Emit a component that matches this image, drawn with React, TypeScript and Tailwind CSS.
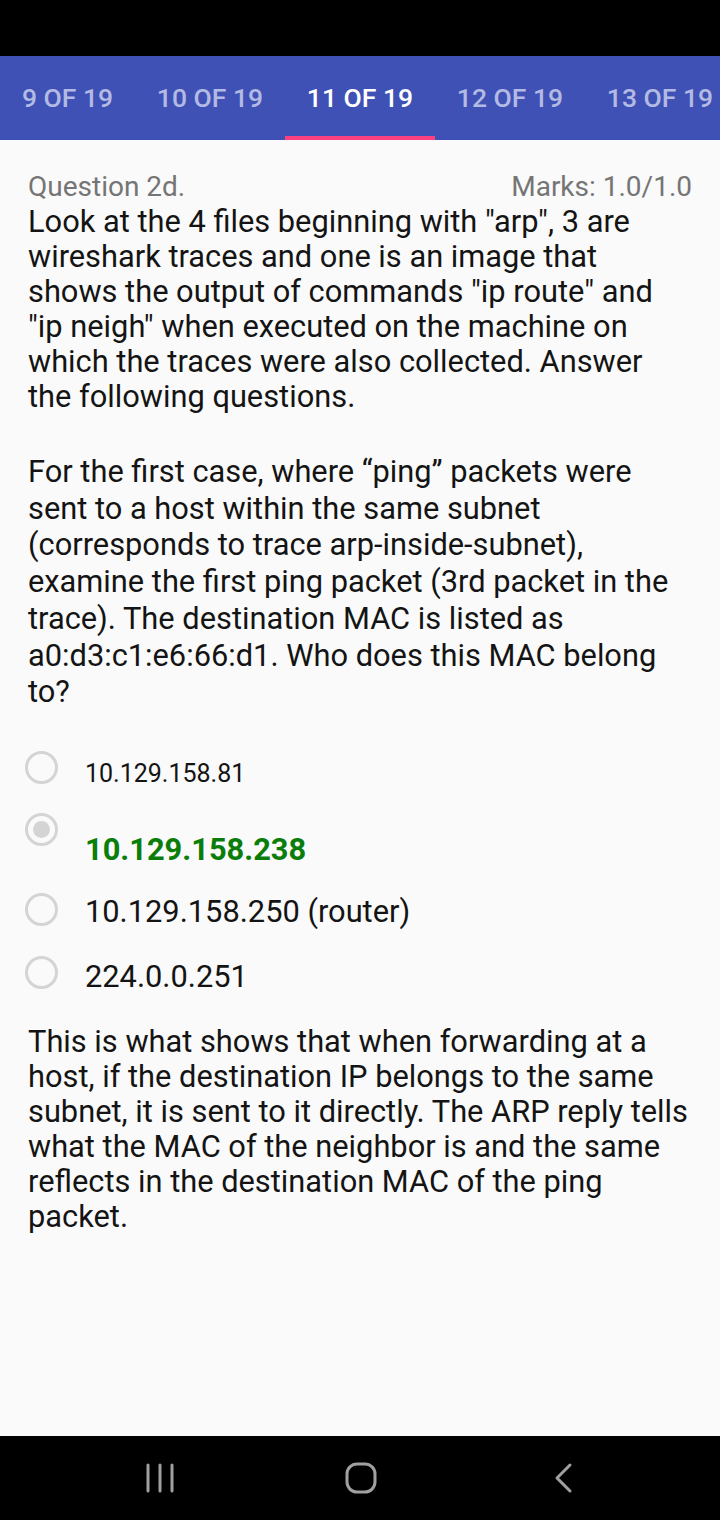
import React from "react";

const tabs = [
  { label: "9 OF 19", w: "w-[135px]", active: false },
  { label: "10 OF 19", w: "w-[150px]", active: false },
  { label: "11 OF 19", w: "w-[150px]", active: true },
  { label: "12 OF 19", w: "w-[150px]", active: false },
  { label: "13 OF 19", w: "w-[150px]", active: false },
];

function Radio({ checked }: { checked?: boolean }) {
  return (
    <div className="w-[33px] h-[33px] rounded-full border-[3px] border-[#d4d4d4] flex items-center justify-center shrink-0">
      {checked && <div className="w-[17px] h-[17px] rounded-full bg-[#d4d4d4]" />}
    </div>
  );
}

export default function App() {
  return (
    <div className="w-[720px] h-[1520px] flex flex-col bg-[#fafafa] overflow-hidden" style={{ fontFamily: "Roboto, 'Noto Sans', sans-serif" }}>
      <div className="h-[56px] bg-black shrink-0" />
      <div className="h-[84px] bg-[#3f51b5] flex overflow-hidden shrink-0">
        {tabs.map((t) => (
          <div key={t.label} className={`${t.w} shrink-0 flex flex-col h-full`}>
            <div className={`flex-1 pt-[4px] flex items-center justify-center text-[26.5px] font-medium ${t.active ? "text-white" : "text-[#b3bae3]"}`}>
              {t.label}
            </div>
            <div className={`h-[4px] ${t.active ? "bg-[#ff4081]" : ""}`} />
          </div>
        ))}
      </div>
      <div className="flex-1 flex flex-col">
        <div className="pl-[28px] w-[685px] pt-[30px]">
          <div className="flex justify-between items-center text-[28px] leading-[34px] text-[#757575] w-[664px]">
            <span>Question 2d.</span>
            <span>Marks: 1.0/1.0</span>
          </div>
          <div className="text-[30.8px] leading-[35px] text-[#141414]">
            Look at the 4 files beginning with "arp", 3 are wireshark traces and one is an image that shows the output of commands "ip route" and "ip neigh" when executed on the machine on which the traces were also collected. Answer the following questions.
          </div>
          <div className="text-[30.8px] leading-[36.7px] text-[#141414] mt-[40px]">
            For the first case, where “ping” packets were sent to a host within the same subnet (corresponds to trace arp-inside-subnet), examine the first ping packet (3rd packet in the trace). The destination MAC is listed as a0:d3:c1:e6:66:d1. Who does this MAC belong to?
          </div>
        </div>
        <div className="mt-[25px] flex flex-col">
          <div className="h-[63px] flex items-center pl-[25px]">
            <Radio />
            <span className="ml-[27px] mt-[12px] text-[25px] text-[#141414]">10.129.158.81</span>
          </div>
          <div className="h-[79px] flex items-start pl-[25px]">
            <div className="mt-[14px]"><Radio checked /></div>
            <span className="ml-[27px] mt-[33px] text-[30.8px] leading-[35px] font-bold text-[#0a7d0a]">10.129.158.238</span>
          </div>
          <div className="h-[63px] flex items-center pl-[25px]">
            <Radio />
            <span className="ml-[27px] mt-[6px] text-[30.8px] text-[#141414]">10.129.158.250 (router)</span>
          </div>
          <div className="h-[63px] flex items-center pl-[25px]">
            <Radio />
            <span className="ml-[27px] mt-[9px] text-[30.8px] text-[#141414]">224.0.0.251</span>
          </div>
        </div>
        <div className="pl-[28px] w-[702px] mt-[20px] text-[30.8px] leading-[35px] text-[#141414]">
          This is what shows that when forwarding at a host, if the destination IP belongs to the same subnet, it is sent to it directly. The ARP reply tells what the MAC of the neighbor is and the same reflects in the destination MAC of the ping packet.
        </div>
      </div>
      <div className="h-[84px] bg-black shrink-0 flex items-center pl-[140px] gap-[161px]">
        <svg width="40" height="40" viewBox="0 0 40 40">
          <g stroke="#a0a0a0" strokeWidth="3" strokeLinecap="round">
            <line x1="8" y1="7" x2="8" y2="33" />
            <line x1="20" y1="7" x2="20" y2="33" />
            <line x1="32" y1="7" x2="32" y2="33" />
          </g>
        </svg>
        <svg width="40" height="40" viewBox="0 0 40 40">
          <rect x="6" y="6" width="28" height="28" rx="10" fill="none" stroke="#a0a0a0" strokeWidth="3" />
        </svg>
        <svg width="40" height="40" viewBox="0 0 40 40">
          <polyline points="28,7 15,20 28,33" fill="none" stroke="#a0a0a0" strokeWidth="3" strokeLinecap="round" strokeLinejoin="round" />
        </svg>
      </div>
    </div>
  );
}
